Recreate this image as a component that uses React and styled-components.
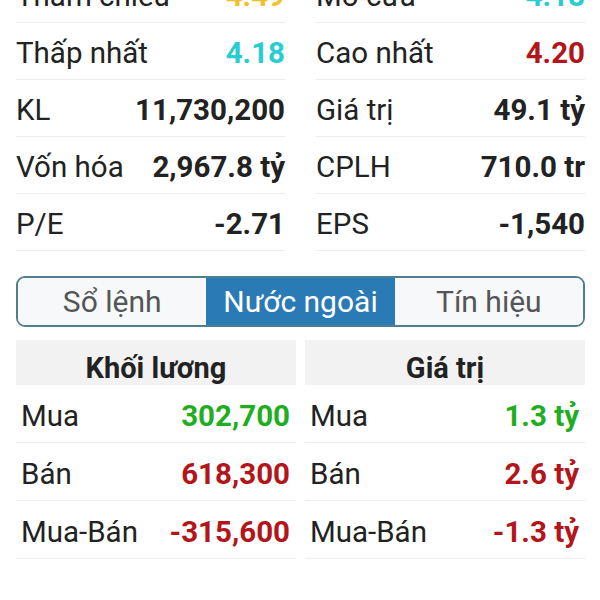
import React from "react";
import styled, { createGlobalStyle } from "styled-components";

const Global = createGlobalStyle`
  html, body {
    margin: 0;
    padding: 0;
    background: #ffffff;
    font-family: Roboto, "Noto Sans", "Liberation Sans", sans-serif;
    color: #222;
    overflow: hidden;
  }
`;

const Page = styled.div`
  width: 600px;
  height: 600px;
  overflow: hidden;
  padding: 0 15px 0 16px;
  box-sizing: border-box;
`;

const StatsGrid = styled.div`
  margin-top: -34px;
  display: grid;
  grid-template-columns: 269px 269px;
  column-gap: 31px;
`;

const StatRow = styled.div`
  height: 57px;
  display: flex;
  align-items: center;
  justify-content: space-between;
  padding-top: 4px;
  border-bottom: 1px solid #ececec;
  box-sizing: border-box;
`;

const Label = styled.span`
  font-size: 29.5px;
  color: #222;
  white-space: nowrap;
`;

const Value = styled.span`
  font-size: 29.5px;
  font-weight: 700;
  color: ${(p) => p.$color || "#222"};
  white-space: nowrap;
`;

const Tabs = styled.div`
  margin-top: 25px;
  height: 51px;
  display: flex;
  border: 2px solid #4d7f8c;
  border-radius: 9px;
  overflow: hidden;
  box-sizing: border-box;
`;

const Tab = styled.div`
  flex: 1;
  display: flex;
  align-items: center;
  justify-content: center;
  font-size: 30px;
  color: ${(p) => (p.$active ? "#ffffff" : "#555")};
  background: ${(p) => (p.$active ? "#2a7ab5" : "#f6f8f9")};
`;

const Flow = styled.div`
  margin-top: 13px;
  display: grid;
  grid-template-columns: 280px 280px;
  column-gap: 9px;
`;

const Column = styled.div`
  display: flex;
  flex-direction: column;
`;

const Head = styled.div`
  height: 45px;
  background: #f2f2f2;
  overflow: hidden;
  text-align: center;
  font-size: 29px;
  font-weight: 700;
  line-height: 34px;
  padding-top: 11px;
  box-sizing: border-box;
  color: #222;
`;

const FlowRow = styled.div`
  height: 58px;
  display: flex;
  align-items: center;
  justify-content: space-between;
  padding: 5px 6px 0 5px;
  border-bottom: 1px solid #ececec;
  box-sizing: border-box;
`;

const GREEN = "#1fae1f";
const RED = "#b3151a";
const CYAN = "#27cdd0";
const YELLOW = "#f2c12a";

const stats = [
  ["Tham chiếu", "4.49", YELLOW, "Mở cửa", "4.18", CYAN],
  ["Thấp nhất", "4.18", CYAN, "Cao nhất", "4.20", RED],
  ["KL", "11,730,200", null, "Giá trị", "49.1 tỷ", null],
  ["Vốn hóa", "2,967.8 tỷ", null, "CPLH", "710.0 tr", null],
  ["P/E", "-2.71", null, "EPS", "-1,540", null],
];

const flows = [
  {
    title: "Khối lương",
    rows: [
      ["Mua", "302,700", GREEN],
      ["Bán", "618,300", RED],
      ["Mua-Bán", "-315,600", RED],
    ],
  },
  {
    title: "Giá trị",
    rows: [
      ["Mua", "1.3 tỷ", GREEN],
      ["Bán", "2.6 tỷ", RED],
      ["Mua-Bán", "-1.3 tỷ", RED],
    ],
  },
];

export default function App() {
  return (
    <Page>
      <Global />
      <StatsGrid>
        {stats.map(([l1, v1, c1, l2, v2, c2]) => (
          <React.Fragment key={l1}>
            <StatRow>
              <Label>{l1}</Label>
              <Value $color={c1}>{v1}</Value>
            </StatRow>
            <StatRow>
              <Label>{l2}</Label>
              <Value $color={c2}>{v2}</Value>
            </StatRow>
          </React.Fragment>
        ))}
      </StatsGrid>

      <Tabs>
        <Tab>Sổ lệnh</Tab>
        <Tab $active>Nước ngoài</Tab>
        <Tab>Tín hiệu</Tab>
      </Tabs>

      <Flow>
        {flows.map((f) => (
          <Column key={f.title}>
            <Head>{f.title}</Head>
            {f.rows.map(([l, v, c]) => (
              <FlowRow key={l}>
                <Label>{l}</Label>
                <Value $color={c}>{v}</Value>
              </FlowRow>
            ))}
          </Column>
        ))}
      </Flow>
    </Page>
  );
}
